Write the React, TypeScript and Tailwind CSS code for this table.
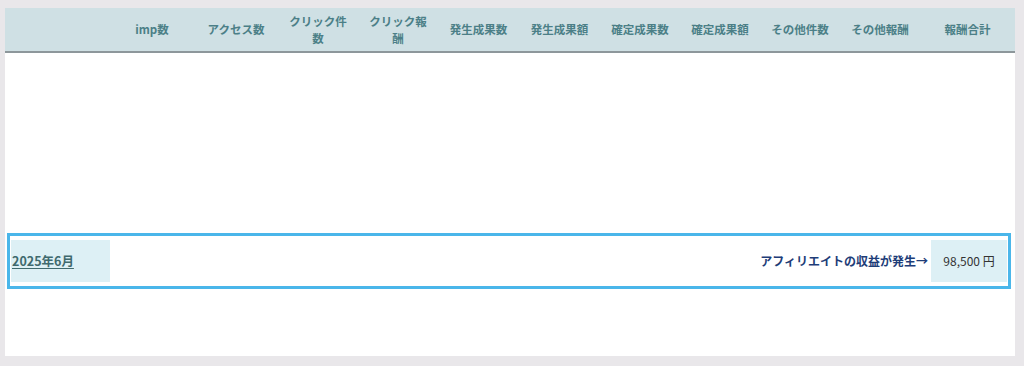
import React from 'react';

const COLUMNS: { label: React.ReactNode; width: string }[] = [
  { label: 'imp数', width: 'w-[84px]' },
  { label: 'アクセス数', width: 'w-[84px]' },
  { label: <>クリック件<br />数</>, width: 'w-[80px]' },
  { label: <>クリック報<br />酬</>, width: 'w-[80px]' },
  { label: '発生成果数', width: 'w-[81px]' },
  { label: '発生成果額', width: 'w-[81px]' },
  { label: '確定成果数', width: 'w-[80px]' },
  { label: '確定成果額', width: 'w-[80px]' },
  { label: 'その他件数', width: 'w-[80px]' },
  { label: 'その他報酬', width: 'w-[80px]' },
  { label: '報酬合計', width: 'w-[95px]' },
];

export default function App() {
  return (
    <div
      className="w-[1024px] h-[366px] bg-[#e9e7ea] pt-[8px] pl-[5px] overflow-hidden"
      style={{ fontFamily: '"Noto Sans CJK JP", "Noto Sans", sans-serif' }}
    >
      <div className="w-[1010px] h-[348px] bg-white flex flex-col">
        {/* header */}
        <div className="h-[45px] bg-[#cfe0e4] border-b-2 border-[#8d979b] flex items-center shrink-0">
          <div className="w-[105px]" />
          {COLUMNS.map((col, i) => (
            <div
              key={i}
              className={`${col.width} text-center text-[11.5px] font-bold leading-[17px] text-[#4b7f87]`}
            >
              {col.label}
            </div>
          ))}
        </div>

        {/* body */}
        <div className="flex-1 pt-[180px] pl-[2px] pr-[4px]">
          <div className="h-[56px] border-[3px] border-[#4ab6ea] flex items-center px-[1px]">
            <div className="w-[99px] h-[42px] bg-[#ddf0f5] flex items-center pl-[1px]">
              <span className="text-[12.5px] font-bold text-[#3f6a6e] underline underline-offset-2">
                2025年6月
              </span>
            </div>
            <div className="flex-1 flex justify-end pr-[3px]">
              <span className="text-[12px] font-bold text-[#1e3d78]">
                アフィリエイトの収益が発生→
              </span>
            </div>
            <div className="w-[76px] h-[42px] bg-[#ddf0f5] flex items-center justify-center">
              <span className="text-[12px] text-[#333]">98,500 円</span>
            </div>
          </div>
        </div>
      </div>
    </div>
  );
}
